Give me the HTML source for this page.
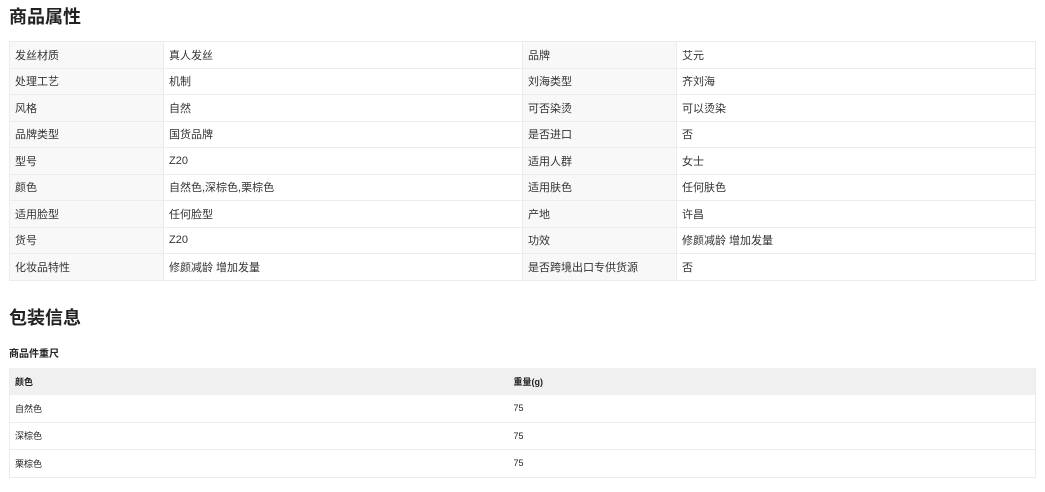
<!DOCTYPE html>
<html><head><meta charset="utf-8"><style>
body{margin:0;background:#fff;font-family:"Liberation Sans","Noto Sans CJK SC",sans-serif;color:#333;width:1045px;height:492px;overflow:hidden;position:relative}
h2{position:absolute;left:9px;margin:0;font-size:18px;font-weight:bold;color:#222;line-height:20px}
table{position:absolute;left:9px;width:1026px;border-collapse:collapse;table-layout:fixed}
.t1 td{border:1px solid #ececec;height:25.5px;padding:0 0 0 5px;font-size:11px;color:#333}
.t1 td.l{background:#f8f8f8}
.t2 td{border-bottom:1px solid #ececec;height:26.5px;padding:0 0 0 5px;font-size:9px;color:#222}
.t2 tr.h td{background:#f0f0f0;font-weight:bold;border:none;height:27px}
.t2{border-left:1px solid #ececec;border-right:1px solid #ececec}
.sub{position:absolute;left:9px;top:345px;font-size:10px;font-weight:bold;color:#222}
</style></head><body>
<h2 style="top:7px">商品属性</h2>
<table class="t1" style="top:41px">
<colgroup><col style="width:154px"><col style="width:359px"><col style="width:154px"><col style="width:359px"></colgroup>
<tr><td class="l">发丝材质</td><td>真人发丝</td><td class="l">品牌</td><td>艾元</td></tr>
<tr><td class="l">处理工艺</td><td>机制</td><td class="l">刘海类型</td><td>齐刘海</td></tr>
<tr><td class="l">风格</td><td>自然</td><td class="l">可否染烫</td><td>可以烫染</td></tr>
<tr><td class="l">品牌类型</td><td>国货品牌</td><td class="l">是否进口</td><td>否</td></tr>
<tr><td class="l">型号</td><td>Z20</td><td class="l">适用人群</td><td>女士</td></tr>
<tr><td class="l">颜色</td><td>自然色,深棕色,栗棕色</td><td class="l">适用肤色</td><td>任何肤色</td></tr>
<tr><td class="l">适用脸型</td><td>任何脸型</td><td class="l">产地</td><td>许昌</td></tr>
<tr><td class="l">货号</td><td>Z20</td><td class="l">功效</td><td>修颜减龄 增加发量</td></tr>
<tr><td class="l">化妆品特性</td><td>修颜减龄 增加发量</td><td class="l">是否跨境出口专供货源</td><td>否</td></tr>
</table>
<h2 style="top:308px">包装信息</h2>
<div class="sub">商品件重尺</div>
<table class="t2" style="top:368px">
<colgroup><col style="width:499px"><col style="width:527px"></colgroup>
<tr class="h"><td>颜色</td><td>重量(g)</td></tr>
<tr><td>自然色</td><td>75</td></tr>
<tr><td>深棕色</td><td>75</td></tr>
<tr><td>栗棕色</td><td>75</td></tr>
</table>
</body></html>
